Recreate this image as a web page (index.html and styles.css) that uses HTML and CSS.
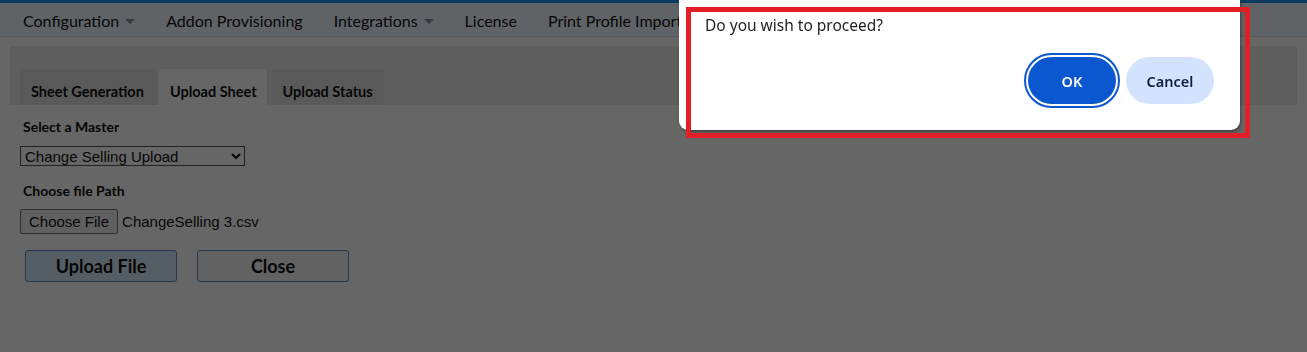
FILE: index.html
```html
<!DOCTYPE html>
<html lang="en">

<head>
  <meta charset="utf-8">
  <title>Upload Sheet</title>
  <link rel="stylesheet" href="styles.css">
</head>

<body>
  <div class="topline"></div>
  <nav class="menu">
    <span class="menu-item">Configuration <span class="caret"></span></span>
    <span class="menu-item">Addon Provisioning</span>
    <span class="menu-item">Integrations <span class="caret"></span></span>
    <span class="menu-item">License</span>
    <span class="menu-item">Print Profile Import</span>
  </nav>

  <main class="content">
    <div class="tabs">
      <div class="tab first">Sheet Generation</div>
      <div class="tab active">Upload Sheet</div>
      <div class="tab">Upload Status</div>
    </div>

    <form class="upload-form" name="uploadForm">
      <label class="field-label">Select a Master</label>
      <select class="master-select" name="master">
        <option>Change Selling Upload</option>
      </select>

      <label class="field-label path">Choose file Path</label>
      <div class="file-row">
        <span class="file-button">Choose File</span>
        <span class="file-name">ChangeSelling 3.csv</span>
      </div>

      <div class="button-row">
        <button type="button" class="action primary">Upload File</button>
        <button type="button" class="action">Close</button>
      </div>
    </form>
  </main>

  <!-- page dimmed behind the confirm dialog -->
  <div class="dim"></div>

  <div class="dialog">
    <p class="dialog-text">Do you wish to proceed?</p>
    <div class="dialog-buttons">
      <button type="button" class="dlg-btn ok">OK</button>
      <button type="button" class="dlg-btn cancel">Cancel</button>
    </div>
  </div>
  <div class="highlight"></div>
</body>

</html>
```

FILE: styles.css
```css
body {
  margin: 0;
  font-family: Lato, 'Open Sans', sans-serif;
  background-color: #ffffff;
  color: #111111;
}

.topline {
  height: 3px;
  background-color: #1f94f5;
}

.menu {
  display: flex;
  align-items: center;
  gap: 31px;
  height: 34px;
  padding: 2px 0 0 23px;
  box-sizing: border-box;
  background-color: #eef7fe;
  border-bottom: 1px solid #d8dde2;
  font-size: 16px;
  white-space: nowrap;
  overflow: hidden;
}

.menu-item {
  display: flex;
  align-items: center;
  gap: 6px;
}

.caret {
  width: 0;
  height: 0;
  border-left: 5px solid transparent;
  border-right: 5px solid transparent;
  border-top: 5px solid #8a8f94;
  margin-top: 2px;
}

.content {
  padding: 9px 10px;
}

/* tab header strip */
.tabs {
  display: flex;
  align-items: flex-end;
  height: 59px;
  padding-left: 10px;
  background-color: #ebebeb;
}

.tab {
  height: 36px;
  padding: 8px 11px 0 11px;
  margin-left: 5px;
  display: flex;
  align-items: center;
  box-sizing: border-box;
  background-color: #dedede;
  border-radius: 4px 4px 0 0;
  font-size: 14.5px;
  font-weight: bold;
}

.tab.first {
  margin-left: 0;
  padding-right: 13px;
}

.tab.active {
  margin-left: 2px;
  padding-right: 10px;
  background-color: #ffffff;
}

.upload-form {
  display: flex;
  flex-direction: column;
  align-items: flex-start;
  padding-left: 10px;
}

.field-label {
  font-size: 14px;
  font-weight: bold;
  margin: 13px 0 0 3px;
  line-height: 17px;
}

.field-label.path {
  margin-top: 16px;
}

.master-select {
  margin-top: 11px;
  width: 225px;
  height: 20px;
  padding: 0;
  font-family: 'Liberation Sans', Arial, sans-serif;
  font-size: 15px;
  color: #111111;
  background-color: #ffffff;
  border: 1px solid #555555;
  border-radius: 0;
}

.file-row {
  display: flex;
  align-items: center;
  gap: 4px;
  margin-top: 10px;
  font-family: 'Liberation Sans', Arial, sans-serif;
  font-size: 15px;
}

.file-button {
  height: 23px;
  padding: 0 8px;
  display: flex;
  align-items: center;
  background-color: #efefef;
  border: 1px solid #767676;
  border-radius: 2px;
}

.button-row {
  display: flex;
  gap: 20px;
  margin: 16px 0 0 5px;
}

.action {
  width: 152px;
  height: 32px;
  font-family: Lato, sans-serif;
  font-size: 18px;
  font-weight: bold;
  color: #111111;
  background-color: #f4f6f8;
  border: 1px solid #5d8fc4;
  border-radius: 3px;
}

.action.primary {
  background-color: #d6eafc;
}

.dim {
  position: fixed;
  inset: 0;
  background-color: rgba(0, 0, 0, 0.6);
}

.dialog {
  position: absolute;
  left: 679px;
  top: 0;
  width: 561px;
  height: 130px;
  box-sizing: border-box;
  padding: 15px 26px 0 26px;
  background-color: #ffffff;
  border-radius: 0 0 9px 9px;
  box-shadow: 1px 2px 3px rgba(0, 0, 0, 0.35);
  font-family: 'Noto Sans', 'Open Sans', sans-serif;
}

.dialog-text {
  margin: 0;
  font-size: 15.5px;
  line-height: 21px;
  color: #1f1f1f;
}

.dialog-buttons {
  display: flex;
  justify-content: flex-end;
  gap: 10px;
  margin-top: 21px;
}

.dlg-btn {
  width: 88px;
  height: 47px;
  border: none;
  border-radius: 24px;
  font-family: 'Noto Sans', 'Open Sans', sans-serif;
  font-size: 14.5px;
  font-weight: 600;
}

.dlg-btn.ok {
  background-color: #0b57d0;
  color: #ffffff;
  outline: 2px solid #0b57d0;
  outline-offset: 2px;
}

.dlg-btn.cancel {
  background-color: #d3e3fd;
  color: #0a1f44;
}

.highlight {
  position: absolute;
  left: 686px;
  top: 7px;
  width: 564px;
  height: 131px;
  box-sizing: border-box;
  border: 5px solid #e41e25;
}
```
